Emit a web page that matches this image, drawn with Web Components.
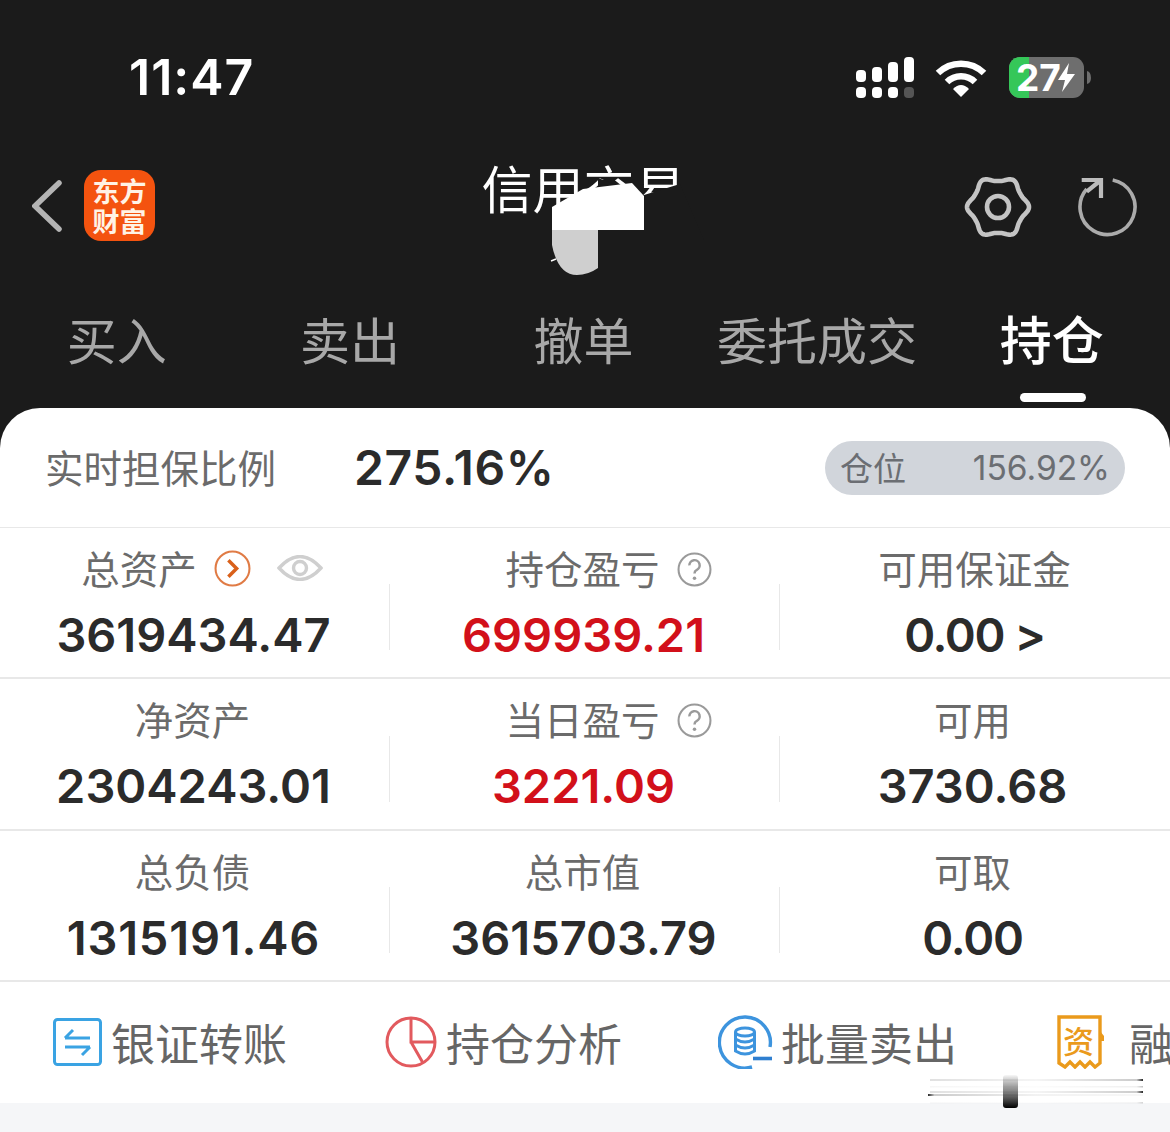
<!DOCTYPE html>
<html lang="zh">
<head>
<meta charset="utf-8">
<title>信用交易</title>
<style>
  html, body { margin: 0; padding: 0; }
  body {
    width: 1170px; height: 1132px; overflow: hidden; position: relative;
    background: #f5f6f8;
    font-family: Inter, "Noto Sans CJK SC", sans-serif;
  }
</style>
</head>
<body>
<trade-header></trade-header>
<asset-panel>
  <ratio-row label="实时担保比例" value="275.16%" pos-label="仓位" pos-value="156.92%"></ratio-row>
  <stat-row>
    <stat-cell label="总资产" value="3619434.47" extra="assets"></stat-cell>
    <stat-cell label="持仓盈亏" value="699939.21" tone="red" extra="help"></stat-cell>
    <stat-cell label="可用保证金" value="0.00 &gt;" track="-1.4" last></stat-cell>
  </stat-row>
  <stat-row>
    <stat-cell label="净资产" value="2304243.01"></stat-cell>
    <stat-cell label="当日盈亏" value="3221.09" tone="red" extra="help"></stat-cell>
    <stat-cell label="可用" value="3730.68" last nudge></stat-cell>
  </stat-row>
  <stat-row>
    <stat-cell label="总负债" value="1315191.46" track="0.8"></stat-cell>
    <stat-cell label="总市值" value="3615703.79"></stat-cell>
    <stat-cell label="可取" value="0.00" track="-1.2" last nudge></stat-cell>
  </stat-row>
  <tool-bar>
    <tool-item label="银证转账" icon="transfer"></tool-item>
    <tool-item label="持仓分析" icon="pie"></tool-item>
    <tool-item label="批量卖出" icon="batch"></tool-item>
    <tool-item label="融资融券" icon="receipt"></tool-item>
  </tool-bar>
</asset-panel>
<photo-marks></photo-marks>

<script>
const CJK = `"Noto Sans CJK SC", sans-serif`;

// six narrow lobes with wider valleys, sampled around the centre
function gearPath(cx, cy, r, lobe) {
  let d = '';
  for (let i = 0; i < 180; i++) {
    const a = i / 180 * Math.PI * 2;
    const rr = r + lobe * Math.pow((Math.cos(a * 6) + 1) / 2, 1.5);
    d += (i ? 'L' : 'M') + (cx + rr * Math.cos(a)).toFixed(2) + ' ' + (cy + rr * Math.sin(a)).toFixed(2);
  }
  return d + 'Z';
}

class TradeHeader extends HTMLElement {
  connectedCallback() {
    const tabs = ['买入', '卖出', '撤单', '委托成交', '持仓'];
    this.attachShadow({mode: 'open'});
    this.shadowRoot.innerHTML = `
      <style>
        :host { display: block; height: 408px; background: #1b1b1b; color: #fff; box-sizing: border-box; }
        .status { height: 155px; display: flex; align-items: flex-start; box-sizing: border-box; padding: 47px 78px 0 129px; justify-content: space-between; }
        .time { font: 600 50px/60px Inter, sans-serif; letter-spacing: 1px; }
        .status svg { display: block; margin-top: 9px; }
        .batt { position: relative; margin: 1px 0 0 1px; }
        .batt span { position: absolute; left: 7px; top: 9px; font: 700 37px/41px Inter, sans-serif; letter-spacing: 0; }
        .nav { height: 110px; display: grid; grid-template-columns: 1fr auto 1fr; align-items: start; box-sizing: border-box; padding: 0 32px; }
        .left { display: flex; align-items: center; gap: 22px; padding-top: 15px; }
        .logo { width: 71px; height: 71px; border-radius: 17px; background: #f4530f; display: flex; align-items: center; justify-content: center;
                font: 700 27px/30px ${CJK}; color: #fff3e6; }
        .logo span { display: block; width: 56px; text-align: center; }
        .title { font: 400 51px/70px ${CJK}; margin-top: -3px; margin-left: -3px; }
        .right { display: flex; justify-content: flex-end; gap: 41px; padding-top: 21px; }
        .right .gear { margin: -4px 4px 0 0; }
        .right .reload { margin-top: 2px; }
        .tabs { display: grid; grid-template-columns: repeat(5, 1fr); height: 143px; padding-right: 3px; }
        .tab { text-align: center; font: 400 50px/66px ${CJK}; color: #a8a8a8; padding-top: 40px; position: relative; white-space: nowrap; }
        .tab.on { color: #fff; font-weight: 500; font-size: 52px; padding-left: 3px; }
        .tab.on::after { content: ''; position: absolute; left: 86px; top: 128px; width: 66px; height: 9px; border-radius: 5px; background: #fff; }
      </style>
      <div class="status">
        <div class="time">11:47</div>
        <div style="display:flex;gap:21px;align-items:flex-start">
          <svg width="58" height="42" viewBox="0 0 58 42" fill="#fff" style="margin-top:10px">
            <rect x="0" y="13" width="10" height="12" rx="4"/><rect x="16" y="10" width="10" height="15" rx="4"/>
            <rect x="32" y="5" width="10" height="20" rx="4"/><rect x="48" y="0" width="10" height="25" rx="4"/>
            <rect x="0" y="30" width="10" height="11" rx="4"/><rect x="16" y="30" width="10" height="11" rx="4"/>
            <rect x="32" y="30" width="10" height="11" rx="4"/><rect x="48" y="30" width="10" height="11" rx="4" fill="#555"/>
          </svg>
          <svg width="52" height="40" viewBox="0 0 52 40" style="margin-top:11px">
            <path d="M3 15 A33 33 0 0 1 49 15" fill="none" stroke="#fff" stroke-width="6.5"/>
            <path d="M12 24 A20 20 0 0 1 40 24" fill="none" stroke="#fff" stroke-width="6.5"/>
            <path d="M18 31 Q26 23 34 31 L26 39 Z" fill="#fff"/>
          </svg>
          <div class="batt">
            <svg width="83" height="42" viewBox="0 0 83 42">
              <rect x="0" y="0" width="75" height="41" rx="11" fill="#6e6e6e"/>
              <path d="M11 0 H20 V41 H11 A11 11 0 0 1 0 30 V11 A11 11 0 0 1 11 0Z" fill="#35c759"/>
              <path d="M78 14 Q82 15 82 21 Q82 26 78 27Z" fill="#6e6e6e"/>
              <path d="M60 6 L49 23 H56 L53 35 L66 17 H58Z" fill="#fff"/>
            </svg>
            <span>27</span>
          </div>
        </div>
      </div>
      <div class="nav">
        <div class="left">
          <svg width="30" height="54" viewBox="0 0 30 54"><path d="M27 4 L3 27 L27 50" fill="none" stroke="#b4b4b4" stroke-width="5.5" stroke-linecap="round"/></svg>
          <div class="logo"><span>东方财富</span></div>
        </div>
        <div class="title">信用交易</div>
        <div class="right">
          <svg class="gear" width="70" height="70" viewBox="0 0 70 70"><path d="${gearPath(35, 35, 26, 5)}" fill="none" stroke="#c4c4c4" stroke-width="4.6" stroke-linejoin="round"/><circle cx="35" cy="35" r="11" fill="none" stroke="#c4c4c4" stroke-width="4.6"/></svg>
          <svg class="reload" width="60" height="62" viewBox="0 0 60 62"><path d="M34.7 2 A27.5 27.5 0 1 1 8.7 11" fill="none" stroke="#ababab" stroke-width="3.6"/><path d="M3.7 2 H23 V20 M23 2 L8.7 13.7" fill="none" stroke="#bcbcbc" stroke-width="4.2"/></svg>
        </div>
      </div>
      <div class="tabs">${tabs.map((t, i) => `<div class="tab${i === 4 ? ' on' : ''}">${t}</div>`).join('')}</div>
    `;
  }
}
customElements.define('trade-header', TradeHeader);

class AssetPanel extends HTMLElement {
  connectedCallback() {
    this.attachShadow({mode: 'open'});
    this.shadowRoot.innerHTML = `
      <style>
        :host { display: block; background: #fff; border-radius: 40px 40px 0 0; height: 695px; position: relative; }
        :host::before { content: ''; position: absolute; inset: 0 0 auto 0; height: 40px; z-index: -1; background: #1b1b1b; }
      </style>
      <slot></slot>
    `;
  }
}
customElements.define('asset-panel', AssetPanel);

class RatioRow extends HTMLElement {
  connectedCallback() {
    const a = n => this.getAttribute(n);
    this.attachShadow({mode: 'open'});
    this.shadowRoot.innerHTML = `
      <style>
        :host { display: flex; align-items: center; height: 120px; box-sizing: border-box; padding: 0 45px 0 45px; border-bottom: 1px solid #e8e8e8; }
        .label { width: 309px; font: 400 38.5px/50px ${CJK}; color: #6b6b6b; margin-top: -3px; white-space: nowrap; }
        .value { flex: 1; font: 600 48px/50px Inter, sans-serif; letter-spacing: .6px; color: #2b2b2b; }
        .pill { width: 300px; height: 54px; border-radius: 27px; background: #d1d5db; box-sizing: border-box; padding: 0 15px; display: flex; align-items: center; justify-content: space-between; color: #6b6e73; }
        .pill b { font: 400 33px/54px ${CJK}; margin-top: -2px; }
        .pill span { font: 400 33.5px/54px Inter, sans-serif; }
      </style>
      <div class="label">${a('label')}</div>
      <div class="value">${a('value')}</div>
      <div class="pill"><b>${a('pos-label')}</b><span>${a('pos-value')}</span></div>
    `;
  }
}
customElements.define('ratio-row', RatioRow);

class StatRow extends HTMLElement {
  connectedCallback() {
    this.attachShadow({mode: 'open'});
    this.shadowRoot.innerHTML = `
      <style>
        :host { display: grid; grid-template-columns: repeat(3, 1fr); height: 151.3px; box-sizing: border-box; border-bottom: 2px solid #e8e8e8; }
      </style>
      <slot></slot>
    `;
  }
}
customElements.define('stat-row', StatRow);

class StatCell extends HTMLElement {
  connectedCallback() {
    const label = this.getAttribute('label');
    const value = this.getAttribute('value').replace('>', '&gt;');
    const extra = this.getAttribute('extra');
    const track = this.getAttribute('track') || 0;
    const help = `<svg width="35" height="35" viewBox="0 0 34 34" style="margin-top:4px"><circle cx="17" cy="17" r="15.5" fill="none" stroke="#9a9a9a" stroke-width="2"/><path d="M12 13 A5 5 0 1 1 19 17.5 Q17 18.5 17 21" fill="none" stroke="#9a9a9a" stroke-width="2.4"/><circle cx="17" cy="25.5" r="1.7" fill="#9a9a9a"/></svg>`;
    const assets = `<svg width="37" height="37" viewBox="0 0 36 36" style="margin-top:2px"><circle cx="18" cy="18" r="16.5" fill="none" stroke="#e07b45" stroke-width="2"/><path d="M14 10 L22 18 L14 26" fill="none" stroke="#d9601a" stroke-width="3.4"/></svg>
      <svg width="46" height="26" viewBox="0 0 46 26" style="margin:2px 0 0 9px"><path d="M2 13 Q23 -10 44 13 Q23 36 2 13Z" fill="none" stroke="#cfcfcf" stroke-width="3.4"/><circle cx="23" cy="13" r="6.5" fill="none" stroke="#cfcfcf" stroke-width="3.4"/></svg>`;
    this.attachShadow({mode: 'open'});
    this.shadowRoot.innerHTML = `
      <style>
        :host { display: grid; grid-template-columns: 1fr 1px; box-sizing: border-box; }
        :host([nudge]) .body { padding-right: 4px; }
        :host(:not([last])) .body { padding-right: 2px; }
        :host(:not([last])) .label { margin-right: 2px; }
        .body { display: flex; flex-direction: column; align-items: center; padding-top: 14px; }
        .label { display: flex; align-items: center; gap: 17px; height: 50px; font: 400 38.5px/50px ${CJK}; color: #6b6b6b; }
        .label.help { padding-left: 52px; }
        .label.assets { padding-left: 19px; }
        .value { font: 600 47px/62px Inter, sans-serif; color: #2b2b2b; white-space: nowrap; margin-top: 12px; letter-spacing: ${track}px; }
        :host([tone="red"]) .value { color: #d2101a; }
        .rule { align-self: end; height: 66px; margin-bottom: 27px; background: #e8e8e8; }
        :host([last]) .rule { background: transparent; }
      </style>
      <div class="body">
        <div class="label ${extra || ''}"><span>${label}</span>${extra === 'help' ? help : extra === 'assets' ? assets : ''}</div>
        <div class="value">${value}</div>
      </div>
      <div class="rule"></div>
    `;
  }
}
customElements.define('stat-cell', StatCell);

class ToolBar extends HTMLElement {
  connectedCallback() {
    this.attachShadow({mode: 'open'});
    this.shadowRoot.innerHTML = `
      <style>
        :host { display: flex; height: 121px; gap: 98px; padding-left: 53px; align-items: center; overflow: hidden; background: #fff; }
      </style>
      <slot></slot>
    `;
  }
}
customElements.define('tool-bar', ToolBar);

class ToolItem extends HTMLElement {
  connectedCallback() {
    const icons = {
      transfer: `<svg width="49" height="48" viewBox="0 0 49 48"><rect x="1.5" y="1.5" width="46" height="45" rx="3" fill="none" stroke="#3aa3e3" stroke-width="3"/><path d="M12 20 H37 M12 20 L20 12 M37 29 H12 M37 29 L29 37" fill="none" stroke="#3aa3e3" stroke-width="3"/></svg>`,
      pie: `<svg width="52" height="52" viewBox="0 0 52 52"><circle cx="26" cy="26" r="24" fill="none" stroke="#e25a5e" stroke-width="3"/><path d="M26 2 V26 H50 M26 26 L38 47" fill="none" stroke="#e25a5e" stroke-width="3"/></svg>`,
      batch: `<svg width="56" height="54" viewBox="0 0 56 54"><path d="M52 32 A25.5 25.5 0 1 0 34 52" fill="none" stroke="#3d94de" stroke-width="3.4"/><path d="M35 43.5 H54" stroke="#2f7fd0" stroke-width="3.6"/><ellipse cx="27" cy="17" rx="9.5" ry="4" fill="none" stroke="#3d94de" stroke-width="3"/><path d="M17.5 17 V36 Q27 42 36.5 36 V17 M17.5 24 Q27 30 36.5 24 M17.5 30 Q27 36 36.5 30" fill="none" stroke="#3d94de" stroke-width="3"/></svg>`,
      receipt: `<div class="rc"><svg width="48" height="54" viewBox="0 0 48 54"><path d="M2 2 H43 V48 L38 52 L33 47 L28 52 L23 47 L18 52 L13 47 L8 52 L2 48 Z" fill="none" stroke="#ea9a1c" stroke-width="3.4"/><path d="M43 16 L47 21 V26 L43 26" fill="#ea9a1c"/></svg><span>资</span></div>`
    };
    const icon = this.getAttribute('icon');
    this.attachShadow({mode: 'open'});
    this.shadowRoot.innerHTML = `
      <style>
        :host { display: flex; flex: none; align-items: center; gap: 9px; font: 400 44px/60px ${CJK}; color: #666; white-space: nowrap; }
        :host([icon="batch"]) { margin-left: -2px; gap: 7px; }
        :host([icon="receipt"]) { gap: 24px; margin-left: 2px; }
        svg { display: block; flex: none; }
        .rc { position: relative; width: 48px; height: 54px; }
        .rc span { position: absolute; left: 6px; top: 8px; font: 500 31px/34px ${CJK}; color: #ea9a1c; }
      </style>
      ${icons[icon]}
      <span>${this.getAttribute('label')}</span>
    `;
  }
}
customElements.define('tool-item', ToolItem);

// retouching that lies on top of the photo: the title patch and the site watermark
class PhotoMarks extends HTMLElement {
  connectedCallback() {
    this.attachShadow({mode: 'open'});
    this.shadowRoot.innerHTML = `
      <style>
        :host { position: absolute; left: 0; top: 0; width: 1170px; height: 1132px; pointer-events: none; }
        svg { display: block; }
      </style>
      <svg width="1170" height="1132" viewBox="0 0 1170 1132">
        <defs>
          <linearGradient id="th" x1="0" y1="0" x2="0" y2="1"><stop offset="0" stop-color="#000" stop-opacity=".03"/><stop offset=".5" stop-color="#333" stop-opacity=".6"/><stop offset="1" stop-color="#000"/></linearGradient>
          <linearGradient id="ln" x1="0" y1="0" x2="1" y2="0"><stop offset="0" stop-color="#000" stop-opacity=".12"/><stop offset=".5" stop-color="#000" stop-opacity=".04"/><stop offset=".97" stop-color="#000" stop-opacity=".2"/><stop offset="1" stop-color="#000" stop-opacity=".85"/></linearGradient>
          <linearGradient id="ln2" x1="0" y1="0" x2="1" y2="0"><stop offset="0" stop-color="#000" stop-opacity=".85"/><stop offset=".03" stop-color="#000" stop-opacity=".2"/><stop offset=".5" stop-color="#000" stop-opacity=".05"/><stop offset="1" stop-color="#000" stop-opacity=".03"/></linearGradient>
        </defs>
        <path d="M598 178 L644 195 L680 184 L704 240 L598 240Z" fill="#1b1b1b"/>
        <path d="M552 207 L583 189 L632 183 L644 196 V230 H552Z" fill="#fff"/>
        <path d="M552 230 H598 V268 Q588 275 577 275 Q558 275 552 245Z" fill="#cfcfcf"/>
        <path d="M551 261 L556 259" stroke="#fff" stroke-width="1.5"/>
        <rect x="930" y="1079" width="213" height="2" fill="url(#ln)"/>
        <rect x="930" y="1086" width="213" height="1.5" fill="url(#ln)" opacity=".3"/>
        <rect x="930" y="1091" width="213" height="2" fill="url(#ln)"/>
        <rect x="928" y="1094" width="215" height="2" fill="url(#ln2)"/>
        <rect x="930" y="1102" width="213" height="1.5" fill="url(#ln)" opacity=".2"/>
        <rect x="1003" y="1075" width="15" height="33" rx="3" fill="url(#th)"/>
      </svg>
    `;
  }
}
customElements.define('photo-marks', PhotoMarks);
</script>
</body>
</html>
